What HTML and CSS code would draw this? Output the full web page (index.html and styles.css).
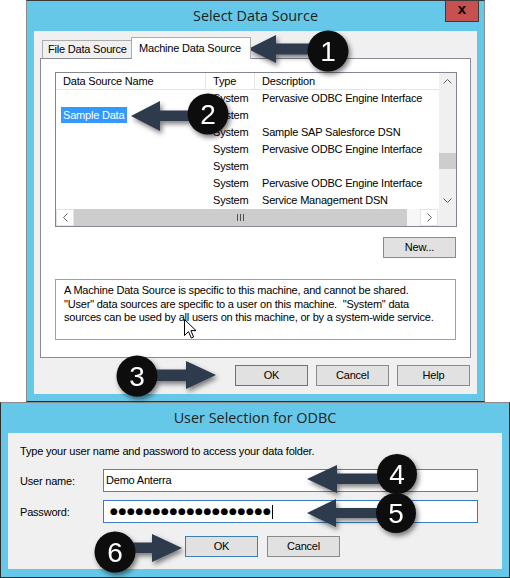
FILE: index.html
```html
<!DOCTYPE html>
<html>
<head>
<meta charset="utf-8">
<title>Select Data Source</title>
<link rel="stylesheet" href="styles.css">
</head>
<body>
<div class="page">
  <section class="win win-select">
    <header class="titlebar">
      <span class="tb-spacer"></span>
      <h1 class="title">Select Data Source</h1>
      <div class="close">x</div>
    </header>
    <div class="client client-select">
      <div class="tabs">
        <div class="tab">File Data Source</div>
        <div class="tab tab-active">Machine Data Source</div>
      </div>
      <div class="tabpanel">
        <div class="listbox">
          <div class="listview">
            <div class="lv-row lv-head"><div class="c1">Data Source Name</div><div class="c2">Type</div><div class="c3">Description</div></div>
            <div class="lv-row"><div class="c1"></div><div class="c2">System</div><div class="c3">Pervasive ODBC Engine Interface</div></div>
            <div class="lv-row"><div class="c1"><span class="sel">Sample Data</span></div><div class="c2">System</div><div class="c3"></div></div>
            <div class="lv-row"><div class="c1"></div><div class="c2">System</div><div class="c3">Sample SAP Salesforce DSN</div></div>
            <div class="lv-row"><div class="c1"></div><div class="c2">System</div><div class="c3">Pervasive ODBC Engine Interface</div></div>
            <div class="lv-row"><div class="c1"></div><div class="c2">System</div><div class="c3"></div></div>
            <div class="lv-row"><div class="c1"></div><div class="c2">System</div><div class="c3">Pervasive ODBC Engine Interface</div></div>
            <div class="lv-row"><div class="c1"></div><div class="c2">System</div><div class="c3">Service Management DSN</div></div>
          </div>
          <div class="vscroll">
            <div class="sb-btn"><svg width="9" height="5" viewBox="0 0 9 5"><polyline points="0.5,4.5 4.5,0.5 8.5,4.5" fill="none" stroke="#606060" stroke-width="1"/></svg></div>
            <div class="vtrack"><div class="vthumb"></div></div>
            <div class="sb-btn"><svg width="9" height="5" viewBox="0 0 9 5"><polyline points="0.5,0.5 4.5,4.5 8.5,0.5" fill="none" stroke="#606060" stroke-width="1"/></svg></div>
          </div>
          <div class="hscroll">
            <div class="sb-btn sb-h"><svg width="5" height="9" viewBox="0 0 5 9"><polyline points="4.5,0.5 0.5,4.5 4.5,8.5" fill="none" stroke="#606060" stroke-width="1"/></svg></div>
            <div class="hthumb"><svg width="7" height="7" viewBox="0 0 7 7"><path d="M0.5 0V7M3.5 0V7M6.5 0V7" stroke="#505050" stroke-width="1"/></svg></div>
            <div class="htrack"></div>
            <div class="sb-btn sb-h"><svg width="5" height="9" viewBox="0 0 5 9"><polyline points="0.5,0.5 4.5,4.5 0.5,8.5" fill="none" stroke="#606060" stroke-width="1"/></svg></div>
          </div>
          <div class="corner"></div>
        </div>
        <div class="new-row"><div class="btn">New...</div></div>
        <div class="desc">A Machine Data Source is specific to this machine, and cannot be shared.<br>"User" data sources are specific to a user on this machine. &nbsp;"System" data<br>sources can be used by all users on this machine, or by a system-wide service.</div>
      </div>
      <div class="actions">
        <div class="btn btn-default">OK</div>
        <div class="btn">Cancel</div>
        <div class="btn">Help</div>
      </div>
    </div>
  </section>

  <section class="win win-user">
    <header class="titlebar">
      <span class="tb-spacer"></span>
      <h1 class="title">User Selection for ODBC</h1>
      <span class="tb-spacer"></span>
    </header>
    <div class="client client-user">
      <p class="intro">Type your user name and password to access your data folder.</p>
      <div class="form">
        <label class="lbl">User name:</label>
        <div class="field">Demo Anterra</div>
        <label class="lbl">Password:</label>
        <div class="field field-focus"><span class="dots">●●●●●●●●●●●●●●●●●●●</span><span class="caret"></span></div>
      </div>
      <div class="actions2">
        <div class="btn btn-default">OK</div>
        <div class="btn">Cancel</div>
      </div>
    </div>
  </section>

  <svg class="cursor" width="13" height="21" viewBox="0 0 13 21">
    <path d="M0.5 0.5 L0.5 16.5 L4.5 12.6 L7.3 19 L9.6 18 L6.9 11.6 L12 11.6 Z" fill="#fff" stroke="#000" stroke-width="1" stroke-linejoin="miter"/>
  </svg>

  <svg class="annotations" width="510" height="578" viewBox="0 0 510 578">
    <defs>
      <filter id="sh" x="-30%" y="-30%" width="160%" height="160%">
        <feDropShadow dx="2" dy="3" stdDeviation="2.5" flood-color="#000" flood-opacity="0.5"/>
      </filter>
    </defs>
    <g filter="url(#sh)">
      <polygon fill="#2e3a4e" points="248,49 276,35 276,43.5 322,43.5 322,54.5 276,54.5 276,63"/>
      <circle cx="328" cy="51" r="20.5" fill="#0d0d0d"/>
      <text x="328" y="61" class="num">1</text>
    </g>
    <g filter="url(#sh)">
      <polygon fill="#2e3a4e" points="131,116 160,101 160,110.5 204,110.5 204,121 160,121 160,131"/>
      <circle cx="208" cy="114" r="20.5" fill="#0d0d0d"/>
      <text x="208" y="124" class="num">2</text>
    </g>
    <g filter="url(#sh)">
      <polygon fill="#2e3a4e" points="216,375 186,361 186,369.5 140,369.5 140,381 186,381 186,389"/>
      <circle cx="137" cy="376" r="20.5" fill="#0d0d0d"/>
      <text x="137" y="386" class="num">3</text>
    </g>
    <g filter="url(#sh)">
      <polygon fill="#2e3a4e" points="307,479 337,465 337,473.5 392,473.5 392,484 337,484 337,493"/>
      <circle cx="397" cy="474" r="20" fill="#0d0d0d"/>
      <text x="397" y="484" class="num">4</text>
    </g>
    <g filter="url(#sh)">
      <polygon fill="#2e3a4e" points="307,513 336,499 336,508 392,508 392,518 336,518 336,527"/>
      <circle cx="396" cy="513" r="20" fill="#0d0d0d"/>
      <text x="396" y="523" class="num">5</text>
    </g>
    <g filter="url(#sh)">
      <polygon fill="#2e3a4e" points="182,548 152,534 152,542.5 118,542.5 118,553 152,553 152,562"/>
      <circle cx="115" cy="552" r="20.5" fill="#0d0d0d"/>
      <text x="115" y="562" class="num">6</text>
    </g>
  </svg>
</div>
</body>
</html>
```

FILE: styles.css
```css
* { box-sizing: border-box; }
html, body { margin: 0; padding: 0; background: #fff; }
body {
  font-family: "Liberation Sans", Arial, sans-serif;
  font-size: 11px;
  letter-spacing: -0.2px;
  color: #000;
}
.page {
  position: relative;
  width: 510px;
  height: 578px;
  overflow: hidden;
}

/* ---------- windows ---------- */
.win {
  background: #66c8e8;
  display: flex;
  flex-direction: column;
}
.win-select {
  margin-left: 26px;
  width: 459px;
  height: 402px;
  border: 1px solid #8a8a8a;
  border-top-color: #3a3a3a;
  border-bottom-color: #2d2d2d;
  padding-bottom: 7px;
}
.win-user {
  width: 510px;
  height: 176px;
  border: 1px solid #2d2d2d;
  border-top-color: #8a8a8a;
  padding-bottom: 8px;
}
.titlebar {
  height: 30px;
  flex: none;
  display: grid;
  grid-template-columns: 1fr auto 1fr;
}
.title {
  margin: 0;
  font-family: "Open Sans", "Noto Sans", sans-serif;
  font-weight: 400;
  font-size: 14.4px;
  letter-spacing: 0;
  line-height: 29px;
  color: #1e1e1e;
  white-space: nowrap;
}
.close {
  justify-self: end;
  align-self: start;
  margin-right: 5px;
  width: 34px;
  height: 21px;
  background: #c75050;
  border: 1px solid #3c3c3c;
  border-top: 0;
  text-align: center;
  font-weight: 700;
  font-size: 15px;
  letter-spacing: 0;
  line-height: 15px;
  color: #000;
}
.client {
  margin: 0 7px;
  background: #f0f0f0;
  display: flex;
  flex-direction: column;
}

/* ---------- select data source ---------- */
.client-select {
  height: 363px;
  padding: 6px 6px 8px;
}
.tabs {
  height: 21px;
  display: flex;
  align-items: flex-end;
  padding-left: 2px;
  flex: none;
}
.tab {
  width: 90px;
  height: 18px;
  border: 1px solid #acacac;
  border-bottom: 0;
  background: #f0f0f0;
  padding-left: 5px;
  line-height: 17px;
  white-space: nowrap;
  overflow: hidden;
}
.tab-active {
  width: 120px;
  height: 22px;
  margin-left: -1px;
  margin-bottom: -1px;
  padding-left: 7px;
  line-height: 20px;
  background: #fff;
  position: relative;
  z-index: 1;
}
.tabpanel {
  height: 300px;
  flex: none;
  border: 1px solid #898c95;
  background: #fff;
  padding: 13px 14px 0;
}
.listbox {
  width: 402px;
  height: 155px;
  border: 1px solid #828790;
  display: grid;
  grid-template-columns: 1fr 17px;
  grid-template-rows: 1fr 17px;
}
.listview { overflow: hidden; }
.lv-row {
  display: grid;
  grid-template-columns: 150px 49px 1fr;
  height: 17px;
  line-height: 17px;
  white-space: nowrap;
}
.lv-row > div { padding-left: 7px; overflow: hidden; }
.lv-head {
  border-bottom: 1px solid #e5e5e5;
  line-height: 16px;
}
.lv-head > div { border-right: 1px solid #e5e5e5; }
.lv-head > .c3 { border-right: 0; }
.sel {
  display: inline-block;
  vertical-align: top;
  margin-left: -2px;
  padding: 0 3px 0 2px;
  line-height: 16px;
  background: #3399ff;
  color: #fff;
}
.vscroll {
  background: #f0f0f0;
  display: flex;
  flex-direction: column;
}
.sb-btn {
  height: 17px;
  flex: none;
  display: flex;
  align-items: center;
  justify-content: center;
}
.sb-btn svg { display: block; }
.vtrack { flex: 1; }
.vthumb {
  margin-top: 63px;
  height: 16px;
  background: #cdcdcd;
}
.hscroll {
  background: #f7f7f7;
  display: flex;
}
.sb-h {
  width: 18px;
  height: 17px;
  background: #fff;
  border: 1px solid #e3e3e3;
}
.hthumb {
  width: 333px;
  background: #cdcdcd;
  display: flex;
  align-items: center;
  justify-content: center;
}
.hthumb svg { display: block; }
.htrack { width: 13px; }
.corner { background: #f0f0f0; }
.new-row {
  width: 401px;
  display: flex;
  justify-content: flex-end;
  margin-top: 10px;
}
.btn {
  width: 73px;
  height: 21px;
  border: 1px solid #8a8a8a;
  background: #e1e1e1;
  text-align: center;
  line-height: 19px;
  flex: none;
}
.btn-default { border-color: #3c7fb1; }
.desc {
  margin-top: 21px;
  width: 401px;
  height: 61px;
  border: 1px solid #a0a0a0;
  padding: 4px 8px;
  line-height: 13.5px;
  white-space: nowrap;
}
.actions {
  display: flex;
  justify-content: flex-end;
  gap: 8px;
  margin-top: 7px;
  margin-right: 1px;
}

/* ---------- user selection ---------- */
.client-user {
  height: 136px;
  padding: 12px;
}
.intro {
  margin: 0;
  line-height: 13px;
}
.form {
  margin-top: 11px;
  display: grid;
  grid-template-columns: 83px 375px;
  row-gap: 8px;
  align-items: center;
}
.lbl { line-height: 13px; padding-top: 2px; }
.field {
  height: 23px;
  border: 1px solid #7a7a7a;
  background: #fff;
  padding-left: 2px;
  line-height: 21px;
  display: flex;
  align-items: center;
}
.field-focus { border-color: #3a7bbf; padding-left: 6px; }
.dots {
  font-family: "DejaVu Sans", sans-serif;
  font-size: 9px;
  letter-spacing: 0.65px;
  line-height: 21px;
}
.caret {
  width: 1px;
  height: 14px;
  background: #000;
  margin-left: 0;
}
.actions2 {
  display: flex;
  gap: 9px;
  margin-top: 13px;
  padding-left: 165px;
}

/* ---------- overlays ---------- */
.annotations {
  position: absolute;
  left: 0;
  top: 0;
  pointer-events: none;
}
.num {
  font-family: "Liberation Sans", Arial, sans-serif;
  font-size: 28px;
  letter-spacing: 0;
  fill: #fff;
  text-anchor: middle;
}
.cursor {
  position: absolute;
  left: 184px;
  top: 319px;
  pointer-events: none;
}
```
